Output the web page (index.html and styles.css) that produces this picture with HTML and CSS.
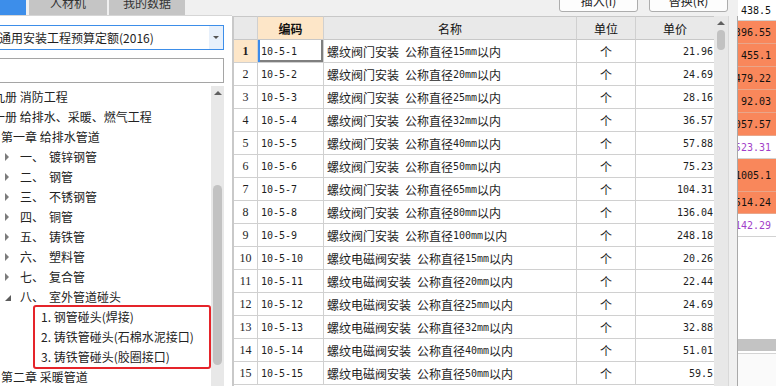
FILE: index.html
```html
<!DOCTYPE html>
<html lang="zh-CN">
<head>
    <meta charset="UTF-8">
    <meta name="viewport" content="width=device-width, initial-scale=1.0">
    <title>定额库</title>
    <link rel="stylesheet" href="styles.css">
</head>
<body>
<div class="app">

    <!-- panneau gauche : onglets + arbre des chapitres -->
    <div class="left">
        <div class="tabs">
            <div class="tab tab-active"></div>
            <div class="tab tab-rcj">人材机</div>
            <div class="tab tab-mine">我的数据</div>
        </div>
        <div class="panel">
            <div class="select">
                <span class="select-text">通用安装工程预算定额(2016)</span>
                <span class="select-btn"><i class="arrow-down"></i></span>
            </div>
            <div class="search"></div>
            <div class="tree">
                <div class="tree-list">
                    <div class="node l0">第九册 消防工程</div>
                    <div class="node l0">第一册 给排水、采暖、燃气工程</div>
                    <div class="node l1">第一章 给排水管道</div>
                    <div class="node l2"><i class="tri"></i><span class="idx">一、</span><span>镀锌钢管</span></div>
                    <div class="node l2"><i class="tri"></i><span class="idx">二、</span><span>钢管</span></div>
                    <div class="node l2"><i class="tri"></i><span class="idx">三、</span><span>不锈钢管</span></div>
                    <div class="node l2"><i class="tri"></i><span class="idx">四、</span><span>铜管</span></div>
                    <div class="node l2"><i class="tri"></i><span class="idx">五、</span><span>铸铁管</span></div>
                    <div class="node l2"><i class="tri"></i><span class="idx">六、</span><span>塑料管</span></div>
                    <div class="node l2"><i class="tri"></i><span class="idx">七、</span><span>复合管</span></div>
                    <div class="node l2"><i class="tri tri-open"></i><span class="idx">八、</span><span>室外管道碰头</span></div>
                    <div class="mark">
                        <div class="node l3">1. 钢管碰头(焊接)</div>
                        <div class="node l3">2. 铸铁管碰头(石棉水泥接口)</div>
                        <div class="node l3">3. 铸铁管碰头(胶圈接口)</div>
                    </div>
                    <div class="node l1">第二章 采暖管道</div>
                </div>
                <div class="vscroll">
                    <i class="arrow-up"></i>
                    <div class="thumb tree-thumb"></div>
                </div>
            </div>
        </div>
    </div>

    <!-- tableau des prix -->
    <div class="center">
        <div class="toolbar">
            <button class="btn">插入(I)</button>
            <button class="btn">替换(R)</button>
        </div>
        <div class="grid-wrap">
            <div class="grid">
                <div class="row head">
                    <div class="c rh"></div>
                    <div class="c code-h">编码</div>
                    <div class="c">名称</div>
                    <div class="c">单位</div>
                    <div class="c">单价</div>
                </div>
                <div class="row">
                    <div class="c rh rh-cur">1</div>
                    <div class="c code cur">10-5-1</div>
                    <div class="c name">螺纹阀门安装&ensp;公称直径<span class="mono">15mm</span>以内</div>
                    <div class="c unit">个</div>
                    <div class="c price">21.96</div>
                </div>
                <div class="row">
                    <div class="c rh">2</div>
                    <div class="c code">10-5-2</div>
                    <div class="c name">螺纹阀门安装&ensp;公称直径<span class="mono">20mm</span>以内</div>
                    <div class="c unit">个</div>
                    <div class="c price">24.69</div>
                </div>
                <div class="row">
                    <div class="c rh">3</div>
                    <div class="c code">10-5-3</div>
                    <div class="c name">螺纹阀门安装&ensp;公称直径<span class="mono">25mm</span>以内</div>
                    <div class="c unit">个</div>
                    <div class="c price">28.16</div>
                </div>
                <div class="row">
                    <div class="c rh">4</div>
                    <div class="c code">10-5-4</div>
                    <div class="c name">螺纹阀门安装&ensp;公称直径<span class="mono">32mm</span>以内</div>
                    <div class="c unit">个</div>
                    <div class="c price">36.57</div>
                </div>
                <div class="row">
                    <div class="c rh">5</div>
                    <div class="c code">10-5-5</div>
                    <div class="c name">螺纹阀门安装&ensp;公称直径<span class="mono">40mm</span>以内</div>
                    <div class="c unit">个</div>
                    <div class="c price">57.88</div>
                </div>
                <div class="row">
                    <div class="c rh">6</div>
                    <div class="c code">10-5-6</div>
                    <div class="c name">螺纹阀门安装&ensp;公称直径<span class="mono">50mm</span>以内</div>
                    <div class="c unit">个</div>
                    <div class="c price">75.23</div>
                </div>
                <div class="row">
                    <div class="c rh">7</div>
                    <div class="c code">10-5-7</div>
                    <div class="c name">螺纹阀门安装&ensp;公称直径<span class="mono">65mm</span>以内</div>
                    <div class="c unit">个</div>
                    <div class="c price">104.31</div>
                </div>
                <div class="row">
                    <div class="c rh">8</div>
                    <div class="c code">10-5-8</div>
                    <div class="c name">螺纹阀门安装&ensp;公称直径<span class="mono">80mm</span>以内</div>
                    <div class="c unit">个</div>
                    <div class="c price">136.04</div>
                </div>
                <div class="row">
                    <div class="c rh">9</div>
                    <div class="c code">10-5-9</div>
                    <div class="c name">螺纹阀门安装&ensp;公称直径<span class="mono">100mm</span>以内</div>
                    <div class="c unit">个</div>
                    <div class="c price">248.18</div>
                </div>
                <div class="row">
                    <div class="c rh">10</div>
                    <div class="c code">10-5-10</div>
                    <div class="c name">螺纹电磁阀安装&ensp;公称直径<span class="mono">15mm</span>以内</div>
                    <div class="c unit">个</div>
                    <div class="c price">20.26</div>
                </div>
                <div class="row">
                    <div class="c rh">11</div>
                    <div class="c code">10-5-11</div>
                    <div class="c name">螺纹电磁阀安装&ensp;公称直径<span class="mono">20mm</span>以内</div>
                    <div class="c unit">个</div>
                    <div class="c price">22.44</div>
                </div>
                <div class="row">
                    <div class="c rh">12</div>
                    <div class="c code">10-5-12</div>
                    <div class="c name">螺纹电磁阀安装&ensp;公称直径<span class="mono">25mm</span>以内</div>
                    <div class="c unit">个</div>
                    <div class="c price">24.69</div>
                </div>
                <div class="row">
                    <div class="c rh">13</div>
                    <div class="c code">10-5-13</div>
                    <div class="c name">螺纹电磁阀安装&ensp;公称直径<span class="mono">32mm</span>以内</div>
                    <div class="c unit">个</div>
                    <div class="c price">32.88</div>
                </div>
                <div class="row">
                    <div class="c rh">14</div>
                    <div class="c code">10-5-14</div>
                    <div class="c name">螺纹电磁阀安装&ensp;公称直径<span class="mono">40mm</span>以内</div>
                    <div class="c unit">个</div>
                    <div class="c price">51.01</div>
                </div>
                <div class="row">
                    <div class="c rh">15</div>
                    <div class="c code">10-5-15</div>
                    <div class="c name">螺纹电磁阀安装&ensp;公称直径<span class="mono">50mm</span>以内</div>
                    <div class="c unit">个</div>
                    <div class="c price">59.5</div>
                </div>
            </div>
            <div class="vscroll vscroll-grid">
                <i class="arrow-up"></i>
                <div class="thumb grid-thumb"></div>
            </div>
            <div class="gutter"></div>
        </div>
    </div>

    <!-- colonne de droite (montants) -->
    <div class="right">
        <div class="rc rc-first">438.5</div>
        <div class="rc hot">1396.55</div>
        <div class="rc hot">455.1</div>
        <div class="rc hot">1479.22</div>
        <div class="rc hot">92.03</div>
        <div class="rc hot">1057.57</div>
        <div class="rc purple">1523.31</div>
        <div class="rc hot rc-tall">1005.1</div>
        <div class="rc hot rc-short">1514.24</div>
        <div class="rc purple">142.29</div>
        <div class="rc-empty"></div>
        <div class="hbar"></div>
        <div class="rc-bottom"></div>
    </div>

</div>
</body>
</html>
```

FILE: styles.css
```css
* {
    box-sizing: border-box;
}

body {
    margin: 0;
    width: 776px;
    height: 386px;
    overflow: hidden;
    font-family: "Noto Sans CJK SC", sans-serif;
    font-size: 12px;
    color: #1e1e1e;
    background: #fff;
}

.app {
    display: flex;
    height: 386px;
}

/* ---------- gauche ---------- */

.left {
    width: 232px;
    flex: none;
    display: flex;
    flex-direction: column;
    overflow: hidden;
}

.tabs {
    height: 16px;
    display: flex;
    background: #f0f0f0;
    border-bottom: 1px solid #d6d6d6;
    overflow: hidden;
}

.tab {
    height: 26px;
    margin-top: -11px;
    background: #c5c5c5;
    color: #333;
    display: flex;
    align-items: center;
    justify-content: center;
}

.tab-active {
    width: 26px;
    margin-right: 3px;
    background: #3d8eea;
}

.tab-rcj {
    width: 78px;
    margin-right: 2px;
}

.tab-mine {
    width: 76px;
}

.panel {
    flex: 1;
    display: flex;
    flex-direction: column;
    padding-top: 9px;
    min-height: 0;
}

.select {
    height: 25px;
    width: 226px;
    margin-left: -2px;
    border: 1px solid #3d8ee9;
    display: flex;
    align-items: center;
}

.select-text {
    white-space: nowrap;
}

.select-btn {
    margin-left: auto;
    width: 14px;
    height: 100%;
    background: #e7f0fb;
    display: flex;
    align-items: center;
    justify-content: center;
}

.arrow-down {
    border-top: 3px solid #555;
    border-left: 3px solid transparent;
    border-right: 3px solid transparent;
}

.search {
    margin-top: 8px;
    height: 25px;
    width: 226px;
    margin-left: -2px;
    border: 1px solid #a5a5a5;
}

.tree {
    margin-top: 3px;
    flex: 1;
    display: flex;
    min-height: 0;
}

.tree-list {
    width: 211px;
    padding-top: 1px;
    overflow: hidden;
}

.node {
    height: 20px;
    line-height: 20px;
    white-space: nowrap;
    display: flex;
    align-items: center;
    color: #222;
}

.l0 {
    text-indent: -19px;
}

.l1 {
    padding-left: 1px;
}

.l2 {
    padding-left: 5px;
}

.l3 {
    padding-left: 6px;
}

.tri {
    width: 0;
    height: 0;
    border-left: 4px solid #7c7c7c;
    border-top: 4px solid transparent;
    border-bottom: 4px solid transparent;
    margin-right: 11px;
}

.tri-open {
    border-left: none;
    border-top: 6px solid transparent;
    border-bottom: none;
    border-right: 6px solid #5c5c5c;
    margin-right: 9px;
    margin-top: 2px;
}

.idx {
    width: 29px;
}

.mark {
    margin: -2px 0 -2px 33px;
    width: 178px;
    border: 2px solid #e5242a;
    border-radius: 3px;
}

.vscroll {
    width: 13px;
    flex: none;
    background: #e8e8e8;
    display: flex;
    flex-direction: column;
    align-items: center;
    padding-top: 5px;
}

.arrow-up {
    width: 0;
    height: 0;
    border-bottom: 4px solid #606060;
    border-left: 4px solid transparent;
    border-right: 4px solid transparent;
}

.thumb {
    background: #c2c2c2;
}

.tree-thumb {
    width: 9px;
    height: 180px;
    margin-top: 90px;
    border-radius: 5px;
}

/* ---------- tableau ---------- */

.center {
    width: 506px;
    flex: none;
    display: flex;
    flex-direction: column;
}

.toolbar {
    height: 16px;
    background: #f0f0f0;
    display: flex;
    justify-content: flex-end;
    gap: 11px;
    padding-right: 10px;
    overflow: hidden;
}

.btn {
    width: 79px;
    height: 24px;
    margin-top: -12px;
    border: 1px solid #adadad;
    border-radius: 3px;
    background: #fdfdfd;
    font-family: "Noto Sans CJK SC", sans-serif;
    font-size: 12px;
    color: #222;
    padding: 0;
}

.grid-wrap {
    flex: 1;
    display: flex;
    border-left: 2px solid #c9c9c9;
    min-height: 0;
}

.grid {
    width: 480px;
    flex: none;
}

.row {
    display: grid;
    grid-template-columns: 24px 66px 253px 59px 78px;
    height: 23px;
}

.c {
    border-right: 1px solid #d0d0d0;
    border-bottom: 1px solid #d0d0d0;
    display: flex;
    align-items: center;
    white-space: nowrap;
    overflow: hidden;
}

.c:last-child {
    border-right: none;
}

.head {
    height: 24px;
}

.head .c {
    background: #e9e9e9;
    border-top: 1px solid #c8c8c8;
    border-bottom-color: #c8c8c8;
    justify-content: center;
    color: #111;
}

.head .code-h {
    background: #fde6c8;
    font-weight: bold;
}

.rh {
    justify-content: center;
    font-family: "Liberation Serif", serif;
    font-size: 12px;
}

.rh-cur {
    background: #fde6c8;
    font-weight: bold;
}

.code,
.price,
.mono {
    font-family: "DejaVu Sans Mono", monospace;
    font-size: 10px;
}

.code {
    padding-left: 3px;
}

.cur {
    box-shadow: inset 2px 0 0 #3b8beb, inset -2px -2px 0 #7f7f7f;
}

.name {
    padding-left: 3px;
}

.unit {
    justify-content: center;
}

.price {
    justify-content: flex-end;
    padding-right: 1px;
}

.vscroll-grid {
    width: 15px;
    border-right: 1px solid #d9d9d9;
}

.grid-thumb {
    width: 8px;
    height: 20px;
    margin-top: 5px;
    border-radius: 4px;
}

.gutter {
    width: 9px;
    flex: none;
    background: #f0f0f0;
    border-right: 1px solid #a9a9a9;
}

/* ---------- colonne droite ---------- */

.right {
    flex: 1;
    display: flex;
    flex-direction: column;
    overflow: hidden;
}

.rc {
    height: 23px;
    flex: none;
    border-bottom: 1px solid #d2d2d2;
    display: flex;
    align-items: center;
    justify-content: flex-end;
    padding-right: 5px;
    white-space: nowrap;
    overflow: hidden;
    font-family: "DejaVu Sans Mono", monospace;
    font-size: 10px;
    color: #111;
}

.rc-first {
    height: 21px;
}

.rc-tall {
    height: 33px;
}

.rc-short {
    height: 22px;
}

.hot {
    background: #f9875b;
    border-bottom-color: #e9a68a;
}

.purple {
    color: #a23fc9;
}

.rc-empty {
    height: 102px;
    flex: none;
}

.hbar {
    height: 12px;
    flex: none;
    background: #c3c3c3;
}

.rc-bottom {
    flex: 1;
    margin-top: 2px;
    border-top: 1px solid #d4d4d4;
    background: #fafafa;
}
```
